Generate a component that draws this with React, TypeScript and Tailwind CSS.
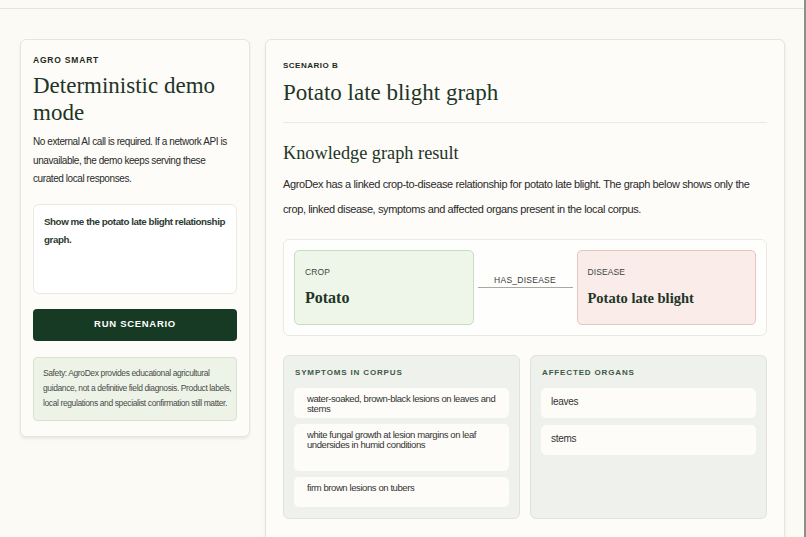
import React from "react";

const sans = "font-['Liberation_Sans',Arial,sans-serif]";
const serif = "font-['Liberation_Serif','Times_New_Roman',serif]";

function LeftCard() {
  return (
    <div className="w-[230px] shrink-0 rounded-[6px] border border-[#e7e5de] bg-[#fdfcf8] px-[12px] pt-[13px] pb-[15px] shadow-[0_2px_3px_rgba(0,0,0,0.07)]">
      <div className={`${sans} text-[8.5px] leading-[14px] font-bold tracking-[0.8px] text-[#1d2a22]`}>AGRO SMART</div>
      <h1 className={`${serif} mt-[5px] text-[23px] leading-[27px] text-[#1f3527]`}>Deterministic demo mode</h1>
      <p className={`${sans} mt-[7px] text-[10px] leading-[18.5px] tracking-[-0.42px] text-[#2a2a2a]`}>
        No external AI call is required. If a network API is unavailable, the demo keeps serving these curated local responses.
      </p>
      <div className={`${sans} mt-[15px] h-[90px] rounded-[6px] border border-[#ebe9e3] bg-white pl-[10px] pr-[5px] pt-[8px] text-[9.8px] leading-[18px] font-bold tracking-[-0.45px] text-[#2d3b31]`}>
        Show me the potato late blight relationship graph.
      </div>
      <button className={`${sans} mt-[15px] flex h-[32px] w-full items-center justify-center rounded-[4px] bg-[#173a24] text-[9.5px] font-bold tracking-[0.7px] text-white`}>
        RUN SCENARIO
      </button>
      <div className={`${sans} mt-[16px] rounded-[4px] border border-[#d7e2cf] bg-[#edf4e7] pl-[9px] pr-[4px] pt-[8px] pb-[9px] text-[8.5px] leading-[15px] tracking-[-0.39px] text-[#4b4b4b]`}>
        Safety: AgroDex provides educational agricultural guidance, not a definitive field diagnosis. Product labels, local regulations and specialist confirmation still matter.
      </div>
    </div>
  );
}

function Node({ kind, name, tone }: { kind: string; name: string; tone: "crop" | "disease" }) {
  const box =
    tone === "crop"
      ? "h-[75px] rounded-[5px] border border-[#c9dcc1] bg-[#eef6e9] px-[10px] pt-[15px]"
      : "h-[75px] rounded-[5px] border border-[#e7c5be] bg-[#f9ece9] px-[10px] pt-[15px]";
  const nameCls =
    tone === "crop"
      ? `${serif} mt-[10px] text-[16px] leading-[20px] font-bold text-[#1f3527]`
      : `${serif} mt-[10px] text-[14.5px] leading-[20px] font-bold text-[#1f3527]`;
  return (
    <div className={box}>
      <div className={`${sans} text-[8.5px] leading-[12px] tracking-[0.1px] text-[#444]`}>{kind}</div>
      <div className={nameCls}>{name}</div>
    </div>
  );
}

function RightCard() {
  const symptoms = [
    { t: "water-soaked, brown-black lesions on leaves and stems", h: "h-[30px]" },
    { t: "white fungal growth at lesion margins on leaf undersides in humid conditions", h: "h-[47px]" },
    { t: "firm brown lesions on tubers", h: "h-[30px]" },
  ];
  return (
    <div className="w-[520px] h-[540px] shrink-0 rounded-[6px] border border-[#e7e5de] bg-[#fdfcf8] px-[17px] pt-[19px] shadow-[0_2px_3px_rgba(0,0,0,0.07)]">
      <div className={`${sans} text-[8px] leading-[14px] font-bold tracking-[0.5px] text-[#1d2a22]`}>SCENARIO B</div>
      <h1 className={`${serif} mt-[5px] text-[23px] leading-[30px] text-[#1f3527]`}>Potato late blight graph</h1>
      <div className="mt-[14px] h-px bg-[#ebe9e2]" />
      <h2 className={`${serif} mt-[17px] text-[18.3px] leading-[26px] text-[#1f3527]`}>Knowledge graph result</h2>
      <p className={`${sans} mt-[6px] text-[11px] leading-[25px] tracking-[-0.38px] text-[#2a2a2a]`}>
        AgroDex has a linked crop-to-disease relationship for potato late blight. The graph below shows only the crop, linked disease, symptoms and affected organs present in the local corpus.
      </p>
      <div className="mt-[17px] grid grid-cols-[1fr_103px_1fr] rounded-[6px] border border-[#ebe9e3] bg-[#fefefd] p-[10px]">
        <Node kind="CROP" name="Potato" tone="crop" />
        <div className="flex flex-col justify-center px-[4px] pb-[12px]">
          <div className={`${sans} text-center text-[8.5px] leading-[11px] tracking-[0.25px] text-[#3a3a3a]`}>HAS_DISEASE</div>
          <div className="mt-[1px] h-px bg-[#a9a9a2]" />
        </div>
        <Node kind="DISEASE" name="Potato late blight" tone="disease" />
      </div>
      <div className="mt-[19px] grid grid-cols-2 gap-[10px]">
        <div className="rounded-[6px] border border-[#e0e3dd] bg-[#eff1ed] px-[10px] pt-[11px] pb-[11px]">
          <div className={`${sans} pl-[1px] text-[8px] leading-[12px] font-bold tracking-[0.85px] text-[#3b5a44]`}>SYMPTOMS IN CORPUS</div>
          <div className="mt-[9px] flex flex-col gap-[6px]">
            {symptoms.map((s, i) => (
              <div
                key={i}
                className={`${sans} ${s.h} rounded-[5px] bg-[#fdfcf8] pl-[13px] pr-[6px] pt-[6px] text-[9.5px] leading-[10px] tracking-[-0.41px] text-[#333]`}
              >
                {s.t}
              </div>
            ))}
          </div>
        </div>
        <div className="rounded-[6px] border border-[#e0e3dd] bg-[#eff1ed] px-[10px] pt-[11px] pb-[11px]">
          <div className={`${sans} pl-[1px] text-[8px] leading-[12px] font-bold tracking-[0.85px] text-[#3b5a44]`}>AFFECTED ORGANS</div>
          <div className="mt-[9px] flex flex-col gap-[7px]">
            {["leaves", "stems"].map((o) => (
              <div key={o} className={`${sans} h-[30px] rounded-[5px] bg-[#fdfcf8] pl-[10px] pt-[7px] text-[10px] leading-[13px] tracking-[-0.3px] text-[#333]`}>
                {o}
              </div>
            ))}
          </div>
        </div>
      </div>
    </div>
  );
}

export default function App() {
  return (
    <div className="flex h-[537px] w-[806px] flex-col overflow-hidden border-r-2 border-[#8e8e8a] bg-[#fbfaf4]">
      <div className="h-[9px] shrink-0 border-b border-[#e6e4dd]" />
      <div className="flex items-start gap-[15px] pl-[20px] pt-[30px]">
        <LeftCard />
        <RightCard />
      </div>
    </div>
  );
}
